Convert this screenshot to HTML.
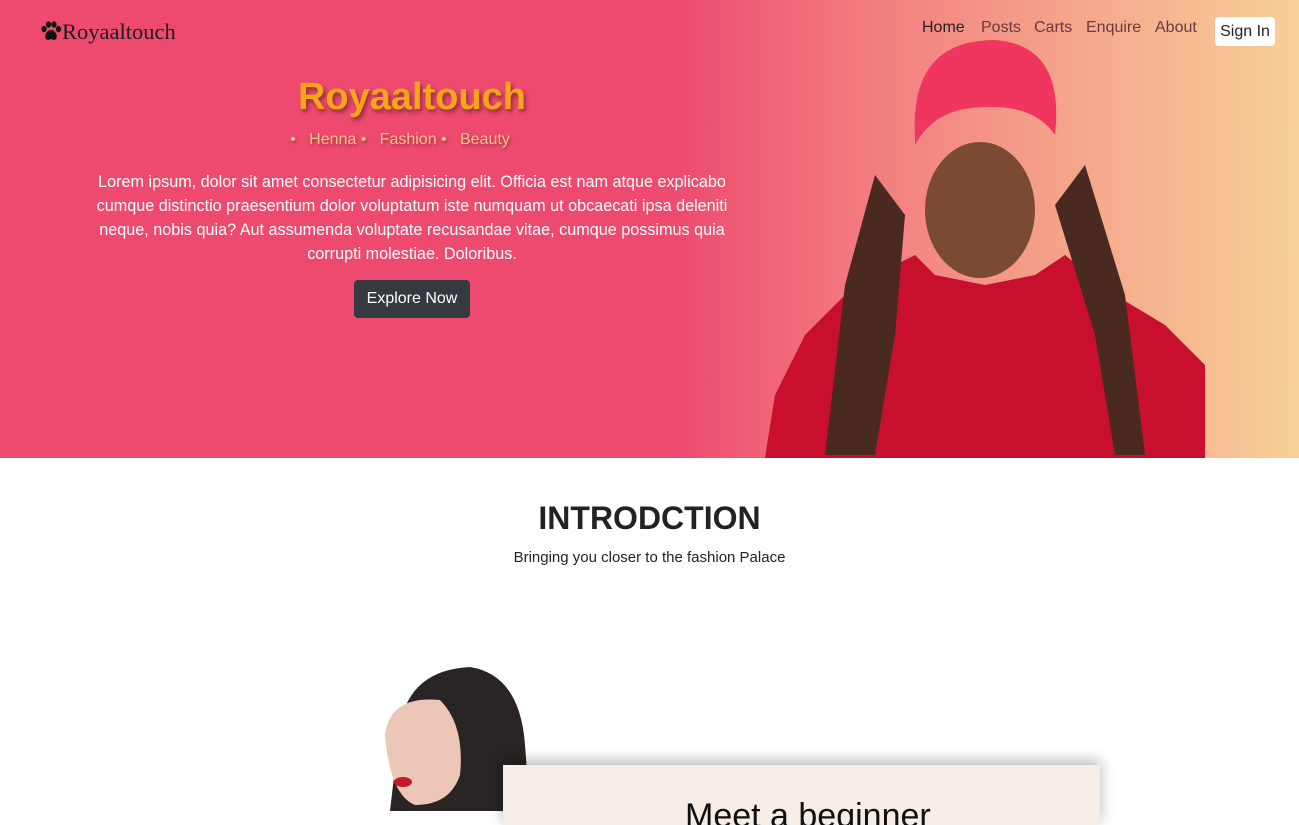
<!DOCTYPE html>
<html><head><meta charset="utf-8"><style>
*{margin:0;padding:0;box-sizing:border-box}
body{width:1299px;height:811px;overflow:hidden;background:#fff;font-family:"Liberation Sans",sans-serif;position:relative}
.hero{position:absolute;left:0;top:0;width:1299px;height:458px;background:linear-gradient(90deg,#ee4a6f 0%,#ee4a6f 52%,#f27a80 66%,#f5a48a 82%,#f8cf98 100%)}
.logo{position:absolute;left:62px;top:19px;font-family:"Liberation Serif",serif;font-size:22.5px;color:#1a1a1a}
.nav{position:absolute;top:19px;font-size:16px;color:#6b3a40}
.signin{position:absolute;left:1215px;top:17px;width:60px;height:29px;background:#fff;border-radius:4px;font-size:16px;color:#222;text-align:center;line-height:29px}
.t1{position:absolute;left:0;width:824px;text-align:center;top:76px;font-size:38px;font-weight:bold;color:#f5a51c;text-shadow:2px 3px 4px rgba(90,20,20,.6)}
.t2{position:absolute;left:0;width:800px;text-align:center;top:131px;font-size:16px;color:#f7c48c;text-shadow:1px 2px 3px rgba(90,20,20,.5)}
.p{position:absolute;left:92px;width:640px;text-align:center;top:170px;font-size:16.2px;line-height:24px;color:#fff}
.btn{position:absolute;left:354px;top:280px;width:116px;height:38px;background:#343a40;border-radius:4px;color:#fff;font-size:16px;text-align:center;line-height:38px}
h2{position:absolute;left:0;width:1299px;text-align:center;top:500px;font-size:32px;font-weight:bold;color:#222}
.sub{position:absolute;left:0;width:1299px;text-align:center;top:549px;font-size:15px;color:#222}
.card{position:absolute;left:503px;top:765px;width:597px;height:60px;background:#f6ede6;box-shadow:0 -4px 14px rgba(0,0,0,.3);overflow:hidden}
.card span{position:absolute;left:182px;top:32px;font-size:34px;color:#111}
</style></head><body>
<div class="hero">
<svg style="position:absolute;left:765px;top:35px" width="440" height="423" viewBox="0 0 440 423">
<path d="M0 423 L10 360 40 300 90 250 150 220 170 240 220 250 270 240 300 220 350 260 400 290 440 330 440 423Z" fill="#c8102e"/>
<path d="M60 420 L80 250 110 140 140 180 130 300 110 420Z" fill="#4a2a20"/>
<path d="M380 420 L360 260 320 130 290 170 330 300 350 420Z" fill="#4a2a20"/>
<ellipse cx="215" cy="175" rx="55" ry="68" fill="#7a4a35"/>
<path d="M150 100 Q145 5 230 5 Q300 10 290 100 Q270 70 220 72 Q170 72 150 110Z" fill="#f0365e"/>
</svg>
</div>
<svg style="position:absolute;left:40px;top:21px" width="22" height="21" viewBox="0 0 22 21"><ellipse cx="4" cy="8" rx="2.6" ry="3.2" fill="#111"/><ellipse cx="8.5" cy="3.5" rx="2.6" ry="3.2" fill="#111"/><ellipse cx="14" cy="3.5" rx="2.6" ry="3.2" fill="#111"/><ellipse cx="18.5" cy="8" rx="2.6" ry="3.2" fill="#111"/><path d="M11 9 C6 9 4 16 6 18 C8 20 10 18 11 18 C12 18 14 20 16 18 C18 16 16 9 11 9Z" fill="#111"/></svg>
<div class="logo">Royaaltouch</div>
<div class="nav" style="left:922px;color:#222">Home</div>
<div class="nav" style="left:981px">Posts</div>
<div class="nav" style="left:1034px">Carts</div>
<div class="nav" style="left:1086px">Enquire</div>
<div class="nav" style="left:1155px">About</div>
<div class="signin">Sign In</div>
<div class="t1">Royaaltouch</div>
<div class="t2">•&nbsp;&nbsp; Henna •&nbsp;&nbsp; Fashion •&nbsp;&nbsp; Beauty</div>
<div class="p">Lorem ipsum, dolor sit amet consectetur adipisicing elit. Officia est nam atque explicabo cumque distinctio praesentium dolor voluptatum iste numquam ut obcaecati ipsa deleniti neque, nobis quia? Aut assumenda voluptate recusandae vitae, cumque possimus quia corrupti molestiae. Doloribus.</div>
<div class="btn">Explore Now</div>
<h2>INTRODCTION</h2>
<div class="sub">Bringing you closer to the fashion Palace</div>
<svg style="position:absolute;left:330px;top:665px" width="210" height="146" viewBox="0 0 210 146">
<path d="M60 146 L70 60 Q80 5 140 2 Q190 10 195 80 L200 146Z" fill="#2a2424"/>
<path d="M55 70 Q60 30 110 35 Q135 60 130 110 Q120 140 85 140 Q60 130 55 70Z" fill="#ecc7b8"/>
<ellipse cx="73" cy="117" rx="9" ry="5" fill="#c01a22"/>
</svg>
<div class="card"><span>Meet a beginner</span></div>
</body></html>
